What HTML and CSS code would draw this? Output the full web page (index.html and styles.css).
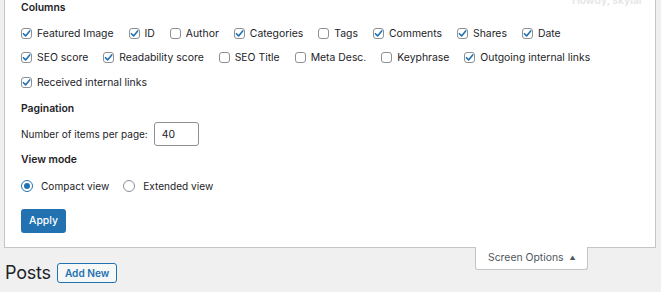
FILE: index.html
```html
<!DOCTYPE html>
<html lang="en">
<head>
    <meta charset="UTF-8">
    <meta name="viewport" content="width=device-width, initial-scale=1.0">
    <title>Posts</title>
    <link rel="stylesheet" href="styles.css">
</head>
<body>
    <span class="howdy">Howdy, skylar</span>

    <div class="screen-meta">
        <div class="legend">Columns</div>
        <div class="check-rows">
            <div class="check-row">
                <label class="check"><span class="box on"><svg viewBox="0 0 11 11"><path d="M2.4 5.7 L4.6 7.9 L8.7 2.9"/></svg></span>Featured Image</label>
                <label class="check"><span class="box on"><svg viewBox="0 0 11 11"><path d="M2.4 5.7 L4.6 7.9 L8.7 2.9"/></svg></span>ID</label>
                <label class="check"><span class="box"></span>Author</label>
                <label class="check"><span class="box on"><svg viewBox="0 0 11 11"><path d="M2.4 5.7 L4.6 7.9 L8.7 2.9"/></svg></span>Categories</label>
                <label class="check"><span class="box"></span>Tags</label>
                <label class="check"><span class="box on"><svg viewBox="0 0 11 11"><path d="M2.4 5.7 L4.6 7.9 L8.7 2.9"/></svg></span>Comments</label>
                <label class="check"><span class="box on"><svg viewBox="0 0 11 11"><path d="M2.4 5.7 L4.6 7.9 L8.7 2.9"/></svg></span>Shares</label>
                <label class="check"><span class="box on"><svg viewBox="0 0 11 11"><path d="M2.4 5.7 L4.6 7.9 L8.7 2.9"/></svg></span>Date</label>
            </div>
            <div class="check-row">
                <label class="check"><span class="box on"><svg viewBox="0 0 11 11"><path d="M2.4 5.7 L4.6 7.9 L8.7 2.9"/></svg></span>SEO score</label>
                <label class="check"><span class="box on"><svg viewBox="0 0 11 11"><path d="M2.4 5.7 L4.6 7.9 L8.7 2.9"/></svg></span>Readability score</label>
                <label class="check"><span class="box"></span>SEO Title</label>
                <label class="check"><span class="box"></span>Meta Desc.</label>
                <label class="check"><span class="box"></span>Keyphrase</label>
                <label class="check"><span class="box on"><svg viewBox="0 0 11 11"><path d="M2.4 5.7 L4.6 7.9 L8.7 2.9"/></svg></span>Outgoing internal links</label>
            </div>
            <div class="check-row">
                <label class="check"><span class="box on"><svg viewBox="0 0 11 11"><path d="M2.4 5.7 L4.6 7.9 L8.7 2.9"/></svg></span>Received internal links</label>
            </div>
        </div>

        <div class="legend spaced">Pagination</div>
        <div class="per-page">
            <label for="perPage">Number of items per page:</label>
            <input type="text" id="perPage" class="num" value="40">
        </div>

        <div class="legend spaced">View mode</div>
        <div class="radios">
            <label class="radio"><span class="dot on"></span>Compact view</label>
            <label class="radio"><span class="dot"></span>Extended view</label>
        </div>

        <button class="apply">Apply</button>
    </div>

    <div class="meta-links">
        <button class="show-settings">Screen Options <span class="arrow">&#9650;</span></button>
    </div>

    <div class="wrap">
        <h1>Posts</h1>
        <a class="add-new" href="#">Add New</a>
    </div>
</body>
</html>
```

FILE: styles.css
```css
body {
    margin: 0;
    background-color: #f0f0f1;
    color: #1d2327;
    font-family: Inter, "Liberation Sans", sans-serif;
    font-size: 10.4px;
    position: relative;
}

.howdy {
    position: absolute;
    top: -6px;
    right: 18px;
    color: #e6e6e6;
    font-size: 10.4px;
    font-weight: 600;
}

.screen-meta {
    margin: 0 5px 0 4px;
    background-color: #fff;
    border: 1px solid #c3c4c7;
    border-top: none;
    padding: 0 16px 14px;
}

.legend {
    font-weight: 600;
    line-height: 15px;
}

.legend.spaced {
    margin-top: 6px;
}

.check-rows {
    margin-top: 6px;
}

.check-row {
    display: flex;
    height: 24.5px;
    align-items: center;
}

.check {
    display: flex;
    align-items: center;
    margin-right: 15px;
    white-space: nowrap;
}

.box {
    width: 11px;
    height: 11px;
    box-sizing: border-box;
    border: 1px solid #8c8f94;
    border-radius: 3px;
    margin-right: 5px;
    position: relative;
}

.box svg {
    position: absolute;
    left: -1px;
    top: -1px;
    width: 11px;
    height: 11px;
}

.box path {
    fill: none;
    stroke: #2271b1;
    stroke-width: 1.6;
    stroke-linecap: round;
    stroke-linejoin: round;
}

.per-page {
    display: flex;
    align-items: center;
    margin-top: 6.5px;
    height: 24px;
    font-size: 10px;
}

.num {
    margin: 0 0 0 6px;
    width: 45px;
    height: 24px;
    box-sizing: border-box;
    border: 1px solid #8c8f94;
    border-radius: 3px;
    padding: 0 7px;
    font-family: inherit;
    font-size: 10.4px;
    color: #1d2327;
}

.radios {
    display: flex;
    align-items: center;
    margin-top: 6.5px;
    height: 24px;
    font-size: 10.1px;
}

.radio {
    display: flex;
    align-items: center;
    margin-right: 14px;
}

.dot {
    width: 12px;
    height: 12px;
    box-sizing: border-box;
    border: 1px solid #8c8f94;
    border-radius: 50%;
    margin-right: 8px;
    display: flex;
    align-items: center;
    justify-content: center;
}

.dot.on {
    border-color: #2271b1;
}

.dot.on::before {
    content: "";
    width: 6px;
    height: 6px;
    border-radius: 50%;
    background-color: #2271b1;
}

.apply {
    display: block;
    margin-top: 11px;
    width: 45px;
    height: 24px;
    padding: 0;
    border: none;
    border-radius: 3px;
    background-color: #2271b1;
    color: #fff;
    font-family: inherit;
    font-size: 10.4px;
    font-weight: 500;
}

.meta-links {
    float: right;
    margin: -1px 73px 0 0;
}

.show-settings {
    display: block;
    width: 113px;
    height: 23px;
    box-sizing: border-box;
    padding: 0 0 0 12px;
    text-align: left;
    background-color: #fff;
    border: 1px solid #c3c4c7;
    border-top: none;
    border-radius: 0 0 3px 3px;
    color: #50575e;
    font-family: inherit;
    font-size: 10.4px;
}

.arrow {
    font-size: 6px;
    margin-left: 3px;
    vertical-align: 1px;
}

.wrap {
    display: flex;
    align-items: center;
    padding: 15px 0 0 5px;
}

.wrap h1 {
    margin: 0 6px 0 0;
    font-size: 18px;
    letter-spacing: -0.2px;
    font-weight: 400;
    line-height: 20px;
}

.add-new {
    display: block;
    height: 20px;
    box-sizing: border-box;
    padding: 0 7px;
    line-height: 18px;
    border: 1px solid #2271b1;
    border-radius: 3px;
    background-color: #f6f7f7;
    color: #2271b1;
    font-size: 10.1px;
    font-weight: 600;
    text-decoration: none;
}
```
